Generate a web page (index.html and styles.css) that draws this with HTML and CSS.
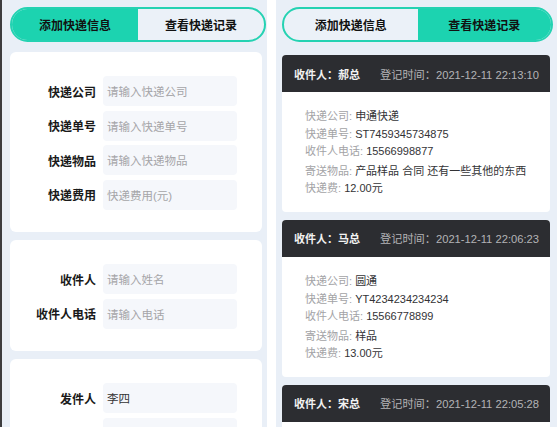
FILE: index.html
```html
<!DOCTYPE html>
<html lang="zh-CN">
<head>
<meta charset="utf-8">
<title>快递登记</title>
<link rel="stylesheet" href="styles.css">
</head>
<body>
<div class="screen">
  <section class="pane pane-left">
    <div class="tabs">
      <div class="tab tab-active">添加快递信息</div>
      <div class="tab">查看快递记录</div>
    </div>
    <div class="form-card">
      <div class="row"><label class="label">快递公司</label><div class="input placeholder">请输入快递公司</div></div>
      <div class="row"><label class="label">快递单号</label><div class="input placeholder">请输入快递单号</div></div>
      <div class="row"><label class="label">快递物品</label><div class="input placeholder">请输入快递物品</div></div>
      <div class="row"><label class="label">快递费用</label><div class="input placeholder">快递费用(元)</div></div>
    </div>
    <div class="form-card">
      <div class="row"><label class="label">收件人</label><div class="input placeholder">请输入姓名</div></div>
      <div class="row"><label class="label">收件人电话</label><div class="input placeholder">请输入电话</div></div>
    </div>
    <div class="form-card">
      <div class="row"><label class="label">发件人</label><div class="input">李四</div></div>
      <div class="row"><span class="label"></span><div class="input"></div></div>
    </div>
  </section>
  <div class="divider"></div>
  <section class="pane pane-right">
    <div class="tabs">
      <div class="tab">添加快递信息</div>
      <div class="tab tab-active">查看快递记录</div>
    </div>
    <div class="records">
      <div class="record">
        <div class="record-head"><span class="who">收件人：郝总</span><span class="when">登记时间：2021-12-11 22:13:10</span></div>
        <div class="record-body">
          <div class="line"><span class="k">快递公司: </span><span class="v">申通快递</span></div>
          <div class="line"><span class="k">快递单号: </span><span class="v">ST7459345734875</span></div>
          <div class="line"><span class="k">收件人电话: </span><span class="v">15566998877</span></div>
          <div class="line line-goods"><span class="k">寄送物品: </span><span class="v">产品样品 合同 还有一些其他的东西</span></div>
          <div class="line"><span class="k">快递费: </span><span class="v">12.00元</span></div>
        </div>
      </div>
      <div class="record">
        <div class="record-head"><span class="who">收件人：马总</span><span class="when">登记时间：2021-12-11 22:06:23</span></div>
        <div class="record-body">
          <div class="line"><span class="k">快递公司: </span><span class="v">圆通</span></div>
          <div class="line"><span class="k">快递单号: </span><span class="v">YT4234234234234</span></div>
          <div class="line"><span class="k">收件人电话: </span><span class="v">15566778899</span></div>
          <div class="line line-goods"><span class="k">寄送物品: </span><span class="v">样品</span></div>
          <div class="line"><span class="k">快递费: </span><span class="v">13.00元</span></div>
        </div>
      </div>
      <div class="record">
        <div class="record-head"><span class="who">收件人：宋总</span><span class="when">登记时间：2021-12-11 22:05:28</span></div>
        <div class="record-body record-body-empty"></div>
      </div>
    </div>
  </section>
</div>
</body>
</html>
```
FILE: styles.css
```css
* { box-sizing: border-box; }
html, body {
  margin: 0;
  padding: 0;
  background: #ffffff;
  overflow: hidden;
}
body {
  font-family: "Liberation Sans", "Noto Sans CJK SC", sans-serif;
  color: #333;
}
.screen {
  display: flex;
  width: 557px;
  height: 427px;
  overflow: hidden;
}
.pane {
  background: #e9eff7;
  padding-top: 7px;
  height: 427px;
  overflow: hidden;
}
.pane-left {
  width: 267px;
  border-left: 2px solid #3d3d3f;
  padding-left: 8px;
  padding-right: 1px;
}
.divider {
  width: 9px;
  background: #ffffff;
}
.pane-right {
  width: 281px;
  padding-left: 6px;
  padding-right: 4px;
}
.tabs {
  display: flex;
  height: 35px;
  border: 2px solid #25d2b2;
  border-radius: 18px;
  overflow: hidden;
  background: #ebf1f8;
}
.tab {
  flex: 1;
  display: flex;
  align-items: center;
  justify-content: center;
  font-size: 12px;
  font-weight: bold;
  color: #111;
}
.tab-active {
  background: #1cd3b0;
}
.form-card {
  background: #ffffff;
  border-radius: 6px;
  margin-right: 4px;
  margin-top: 8px;
  padding: 24px 0 22.5px;
  display: flex;
  flex-direction: column;
  gap: 4.5px;
}
.tabs + .form-card { margin-top: 10px; }
.row {
  display: flex;
  align-items: center;
  gap: 7px;
}
.label {
  width: 86px;
  text-align: right;
  font-size: 12px;
  font-weight: bold;
  color: #1a1a1a;
}
.input {
  width: 134px;
  height: 30px;
  background: #f5f7fb;
  border-radius: 4px;
  padding-left: 4px;
  display: flex;
  align-items: center;
  font-size: 11.5px;
  color: #333;
}
.placeholder { color: #a5a5a8; }
.records {
  margin-top: 13px;
  display: flex;
  flex-direction: column;
  gap: 8px;
  margin-right: 3px;
}
.record {
  border-radius: 4px;
  overflow: hidden;
  background: #ffffff;
}
.record-head {
  height: 37px;
  background: #2c2d31;
  display: flex;
  align-items: center;
  justify-content: space-between;
  padding: 0 11px 0 12px;
  font-size: 11px;
}
.who {
  color: #f2f2f2;
  font-weight: bold;
}
.when {
  color: #b3b3b6;
  font-size: 11.2px;
}
.record-body {
  padding: 16px 10px 14px 23px;
  font-size: 11px;
}
.record-body-empty { height: 60px; }
.line {
  line-height: 17.6px;
  white-space: nowrap;
}
.line-goods { margin-top: 2px; }
.k { color: #a3a3a6; }
.v { color: #333336; }
```
